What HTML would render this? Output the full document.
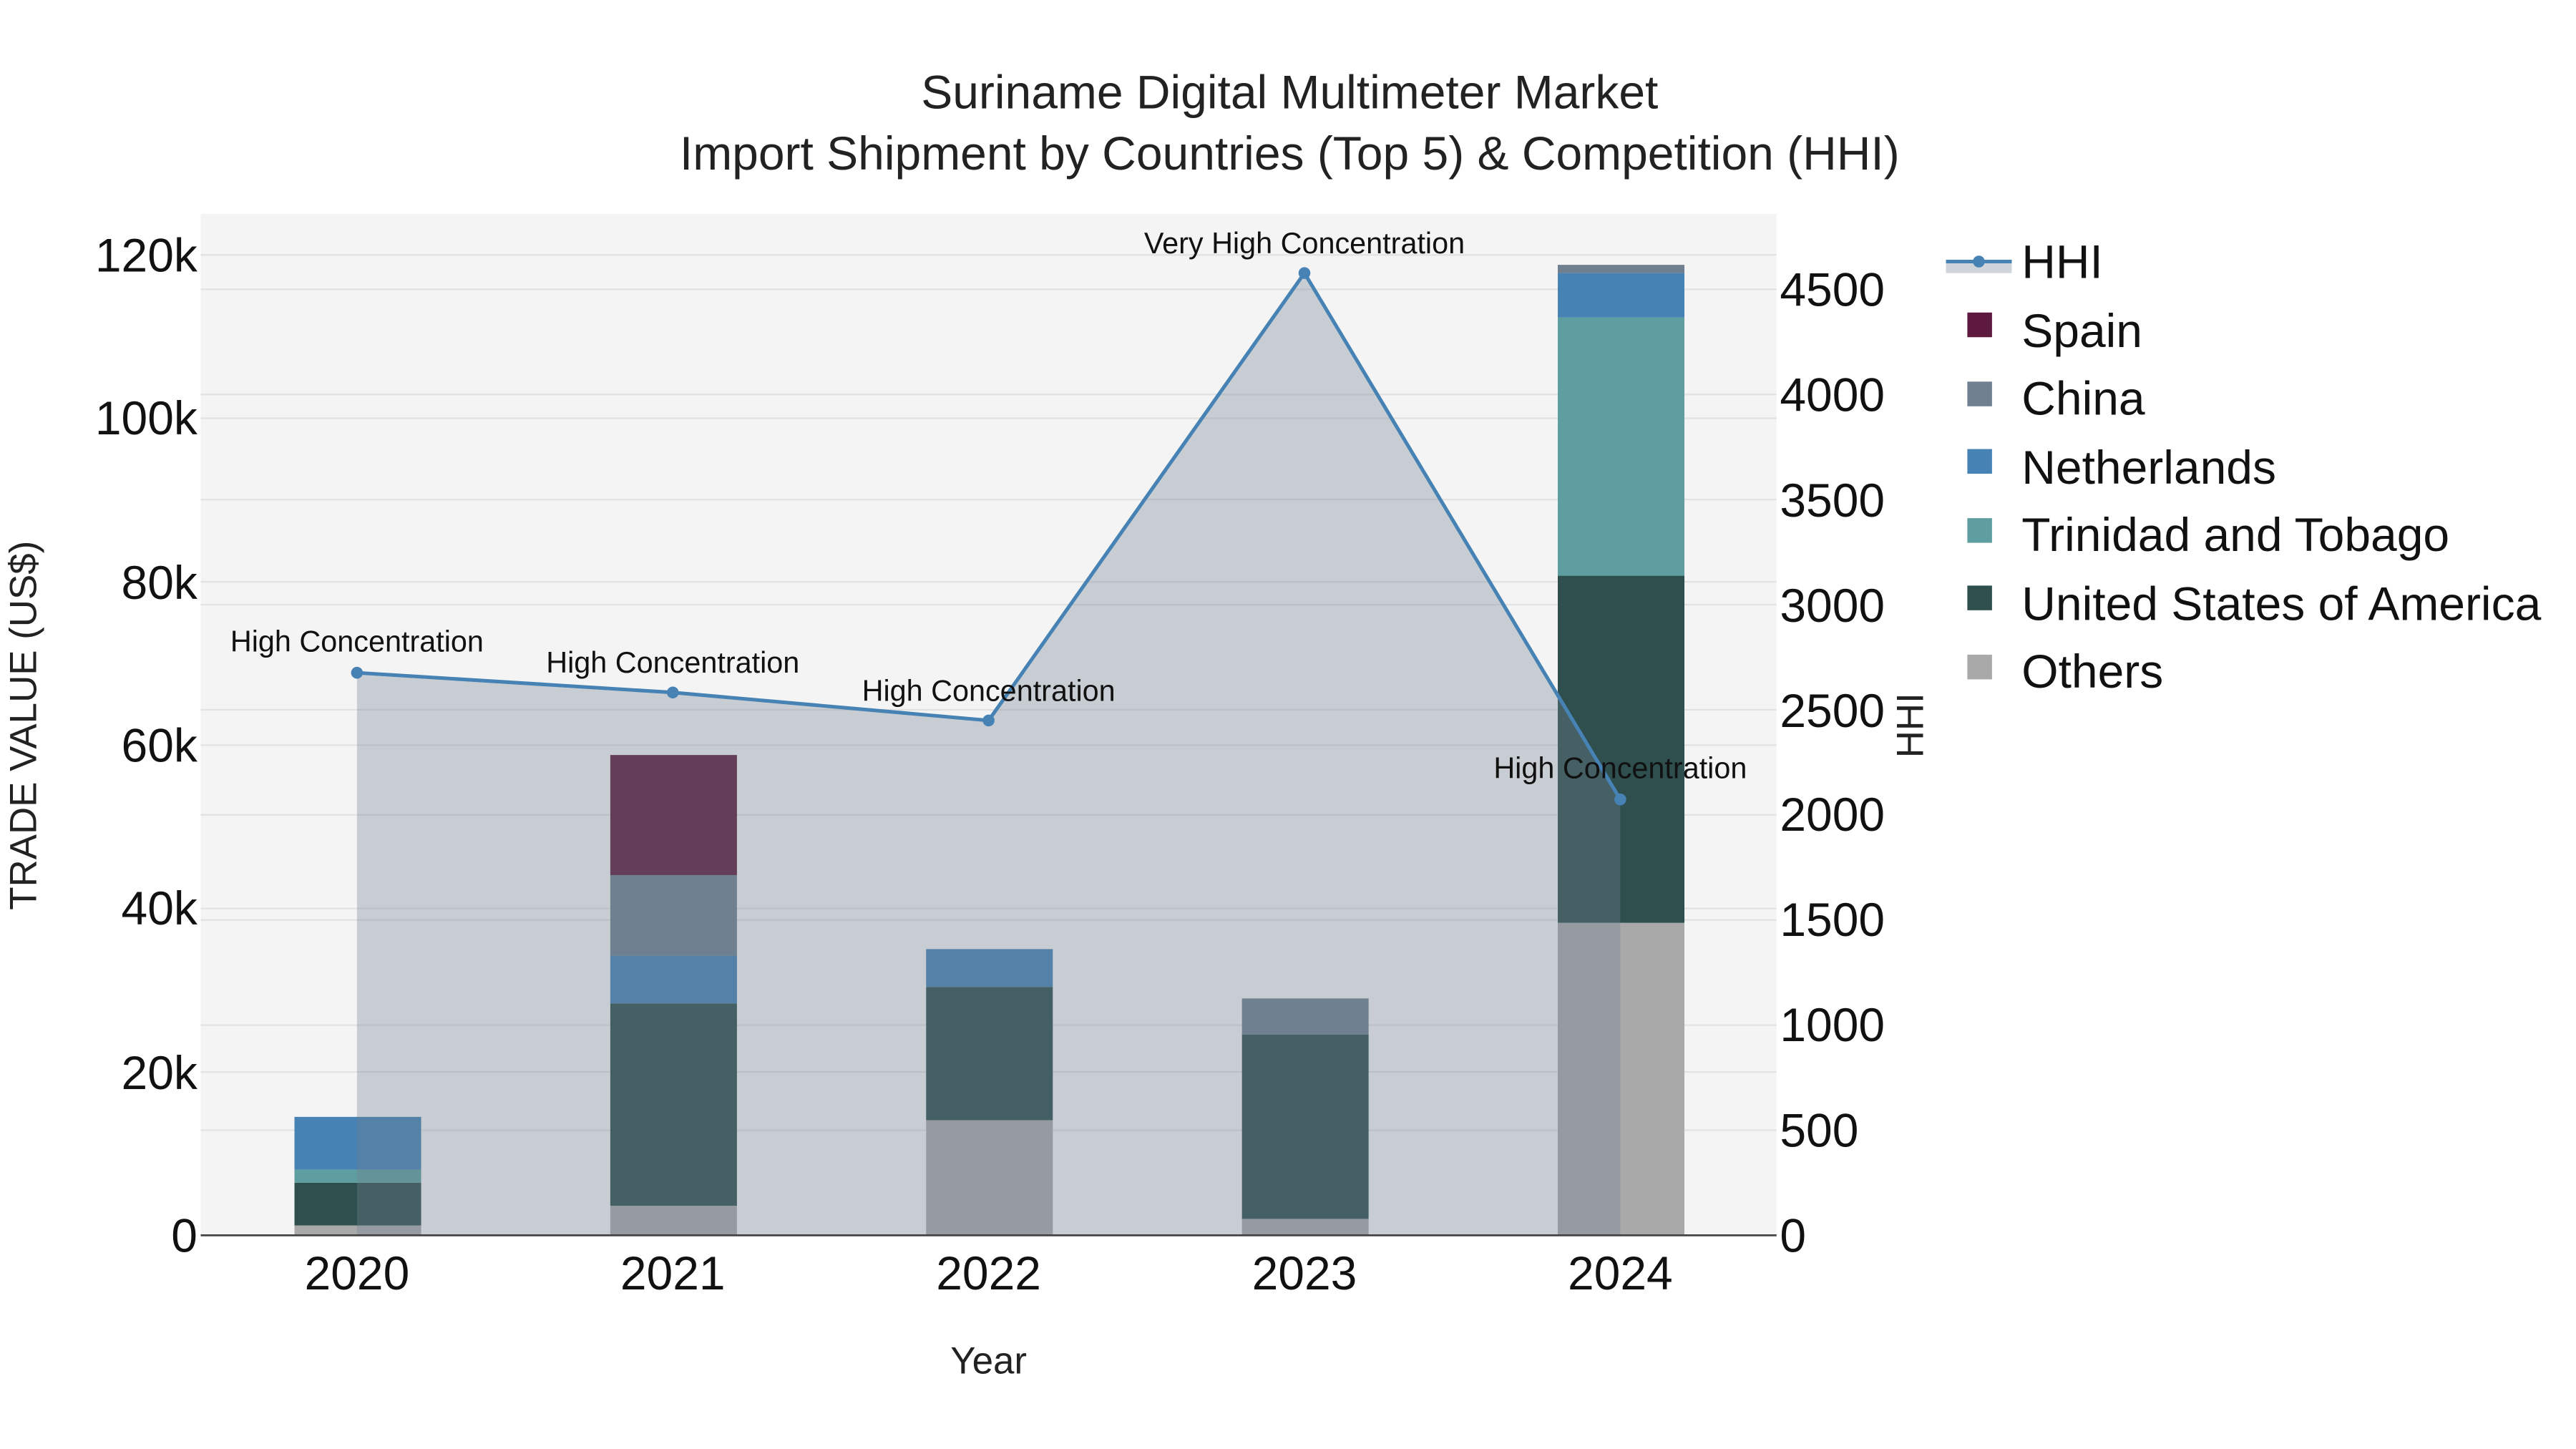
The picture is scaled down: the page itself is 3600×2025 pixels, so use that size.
<!DOCTYPE html>
<html><head><meta charset="utf-8"><style>html,body{margin:0;padding:0;background:#fff}svg{display:block}text{font-family:"Liberation Sans",sans-serif}</style></head><body>
<svg width="3600" height="2025" viewBox="0 0 1566 880.9" xmlns="http://www.w3.org/2000/svg">
<rect width="1566" height="880.9" fill="#fff"/>
<rect x="122" y="130" width="958" height="621" fill="#f4f4f4"/>
<g stroke="#e2e2e2" stroke-width="1">
<line x1="122" x2="1080" y1="651.7" y2="651.7"/><line x1="122" x2="1080" y1="552.3" y2="552.3"/><line x1="122" x2="1080" y1="453" y2="453"/><line x1="122" x2="1080" y1="353.7" y2="353.7"/><line x1="122" x2="1080" y1="254.3" y2="254.3"/><line x1="122" x2="1080" y1="155" y2="155"/>
<line x1="122" x2="1080" y1="687.1" y2="687.1"/><line x1="122" x2="1080" y1="623.2" y2="623.2"/><line x1="122" x2="1080" y1="559.3" y2="559.3"/><line x1="122" x2="1080" y1="495.4" y2="495.4"/><line x1="122" x2="1080" y1="431.5" y2="431.5"/><line x1="122" x2="1080" y1="367.6" y2="367.6"/><line x1="122" x2="1080" y1="303.7" y2="303.7"/><line x1="122" x2="1080" y1="239.8" y2="239.8"/><line x1="122" x2="1080" y1="175.9" y2="175.9"/>
</g>
<g>
<rect x="179" y="745" width="77" height="6" fill="#a9a9a9"/><rect x="179" y="719" width="77" height="26" fill="#2f4f4f"/><rect x="179" y="711" width="77" height="8" fill="#5f9ea0"/><rect x="179" y="679" width="77" height="32" fill="#4682b4"/>
<rect x="371" y="733" width="77" height="18" fill="#a9a9a9"/><rect x="371" y="610" width="77" height="123" fill="#2f4f4f"/><rect x="371" y="581" width="77" height="29" fill="#4682b4"/><rect x="371" y="532" width="77" height="49" fill="#708090"/><rect x="371" y="459" width="77" height="73" fill="#5e1a3e"/>
<rect x="563" y="681" width="77" height="70" fill="#a9a9a9"/><rect x="563" y="600" width="77" height="81" fill="#2f4f4f"/><rect x="563" y="577" width="77" height="23" fill="#4682b4"/>
<rect x="755" y="741" width="77" height="10" fill="#a9a9a9"/><rect x="755" y="629" width="77" height="112" fill="#2f4f4f"/><rect x="755" y="607" width="77" height="22" fill="#708090"/>
<rect x="947" y="561" width="77" height="190" fill="#a9a9a9"/><rect x="947" y="350" width="77" height="211" fill="#2f4f4f"/><rect x="947" y="193" width="77" height="157" fill="#5f9ea0"/><rect x="947" y="166" width="77" height="27" fill="#4682b4"/><rect x="947" y="161" width="77" height="5" fill="#708090"/>
</g>
<path d="M217,409 L409,421 L601,438 L793,166 L985,486 L985,751 L217,751 Z" fill="#708090" fill-opacity="0.34"/>
<line x1="122" x2="1080" y1="751" y2="751" stroke="#444" stroke-width="1.2"/>
<polyline points="217,409 409,421 601,438 793,166 985,486" fill="none" stroke="#4682b4" stroke-width="2.2"/>
<g fill="#4682b4"><circle cx="217" cy="409" r="3.6"/><circle cx="409" cy="421" r="3.6"/><circle cx="601" cy="438" r="3.6"/><circle cx="793" cy="166" r="3.6"/><circle cx="985" cy="486" r="3.6"/></g>
<g font-size="18" text-anchor="middle" fill="#111">
<text x="217" y="396">High Concentration</text><text x="409" y="409">High Concentration</text><text x="601" y="426">High Concentration</text><text x="793" y="154">Very High Concentration</text><text x="985" y="473">High Concentration</text>
</g>
<g font-size="28.7" text-anchor="end" fill="#111">
<text x="120" y="761">0</text><text x="120" y="662">20k</text><text x="120" y="562">40k</text><text x="120" y="463">60k</text><text x="120" y="364">80k</text><text x="120" y="264">100k</text><text x="120" y="165">120k</text>
</g>
<g font-size="28.7" fill="#111">
<text x="1082" y="761">0</text><text x="1082" y="697">500</text><text x="1082" y="633">1000</text><text x="1082" y="569">1500</text><text x="1082" y="505">2000</text><text x="1082" y="442">2500</text><text x="1082" y="378">3000</text><text x="1082" y="314">3500</text><text x="1082" y="250">4000</text><text x="1082" y="186">4500</text>
</g>
<g font-size="28.7" text-anchor="middle" fill="#111">
<text x="217" y="784">2020</text><text x="409" y="784">2021</text><text x="601" y="784">2022</text><text x="793" y="784">2023</text><text x="985" y="784">2024</text>
</g>
<text x="601" y="835" font-size="23" text-anchor="middle" fill="#222">Year</text>
<text transform="translate(22,441) rotate(-90)" font-size="23" text-anchor="middle" fill="#222">TRADE VALUE (US$)</text>
<text transform="translate(1169,441) rotate(-90)" font-size="23" text-anchor="middle" fill="#222">HHI</text>
<g font-size="28.7" text-anchor="middle" fill="#222">
<text x="784" y="66">Suriname Digital Multimeter Market</text>
<text x="784" y="103">Import Shipment by Countries (Top 5) &amp; Competition (HHI)</text>
</g>
<rect x="1183" y="159" width="40" height="7" fill="#708090" fill-opacity="0.34"/>
<line x1="1183" x2="1223" y1="159" y2="159" stroke="#4682b4" stroke-width="2.2"/><circle cx="1203" cy="159" r="3.6" fill="#4682b4"/>
<rect x="1196" y="190" width="15" height="15" fill="#5e1a3e"/>
<rect x="1196" y="232" width="15" height="15" fill="#708090"/>
<rect x="1196" y="273" width="15" height="15" fill="#4682b4"/>
<rect x="1196" y="315" width="15" height="15" fill="#5f9ea0"/>
<rect x="1196" y="356" width="15" height="15" fill="#2f4f4f"/>
<rect x="1196" y="398" width="15" height="15" fill="#a9a9a9"/>
<g font-size="28.7" fill="#111">
<text x="1229" y="169">HHI</text><text x="1229" y="211">Spain</text><text x="1229" y="252">China</text><text x="1229" y="294">Netherlands</text><text x="1229" y="335">Trinidad and Tobago</text><text x="1229" y="377">United States of America</text><text x="1229" y="418">Others</text>
</g>
</svg>
</body></html>
